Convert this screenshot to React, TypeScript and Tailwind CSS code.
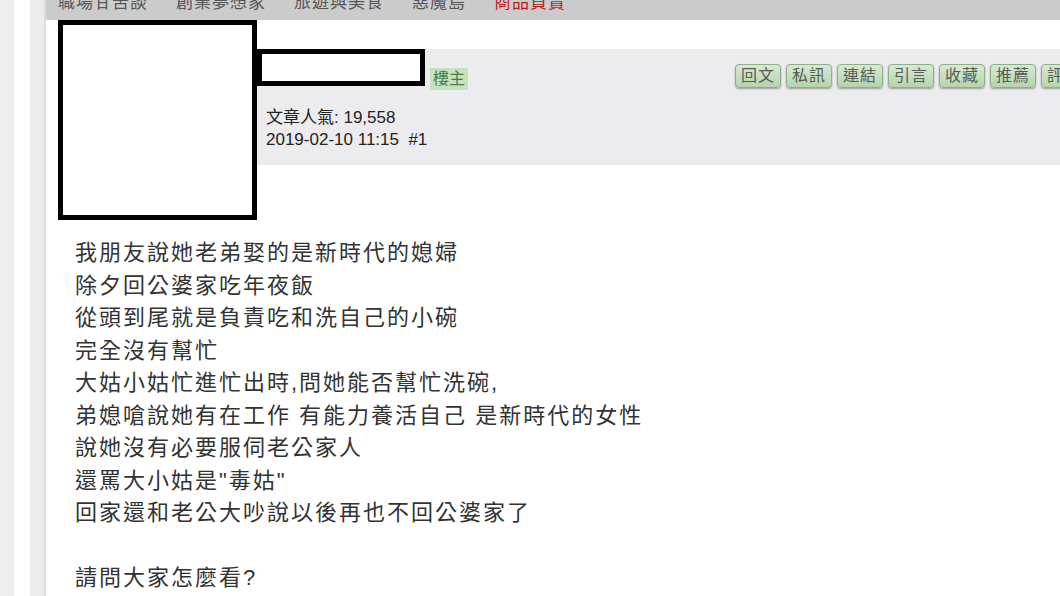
import React from "react";

const NAV = ["職場甘苦談", "創業夢想家", "旅遊與美食", "惡魔島"];

const ACTIONS = ["回文", "私訊", "連結", "引言", "收藏", "推薦", "評分"];

const LINES = [
  "我朋友說她老弟娶的是新時代的媳婦",
  "除夕回公婆家吃年夜飯",
  "從頭到尾就是負責吃和洗自己的小碗",
  "完全沒有幫忙",
  "大姑小姑忙進忙出時,問她能否幫忙洗碗,",
  "弟媳嗆說她有在工作 有能力養活自己 是新時代的女性",
  "說她沒有必要服伺老公家人",
  "還罵大小姑是\"毒姑\"",
  "回家還和老公大吵說以後再也不回公婆家了",
  "",
  "請問大家怎麼看?",
];

const App = () => {
  return (
    <div
      className="flex w-[1060px] h-[596px] overflow-hidden bg-white text-[#333]"
      style={{ fontFamily: '"Liberation Sans", "Noto Sans CJK TC", sans-serif' }}
    >
      {/* Left gutter */}
      <div className="flex shrink-0">
        <div className="w-[14px] bg-[#efefef]" />
        <div className="w-[16px] bg-white" />
        <div className="w-[14px] bg-[#ececec]" />
        <div className="w-[2px] bg-[#dcdcdc]" />
      </div>

      {/* Main column */}
      <div className="flex-1 flex flex-col min-w-0">
        {/* Board nav */}
        <div className="h-[20px] shrink-0 bg-[#cbcbcb] overflow-hidden">
          <div className="flex gap-[28px] pl-[12px] -mt-[9px] text-[17px] leading-[24px] text-[#555] tracking-[1px] whitespace-nowrap">
            {NAV.map((n) => (
              <span key={n}>{n}</span>
            ))}
            <span className="text-[#b81c1c]">商品買賣</span>
          </div>
        </div>

        {/* Post header */}
        <div className="flex pl-[12px]">
          <div className="w-[199px] h-[200px] shrink-0 border-[5px] border-black bg-white" />
          <div className="flex-1 mt-[29px] h-[116px] bg-[#ececef] flex overflow-hidden">
            <div className="w-[479px] shrink-0 flex flex-col -ml-[1px]">
              <div className="flex items-end gap-[5px]">
                <div className="w-[169px] h-[37px] border-[5px] border-l-[6px] border-black bg-white" />
                <span className="mb-[-4px] px-[3px] h-[22px] leading-[22px] bg-[#c3e2bd] text-[#4d7a4a] text-[16px]">
                  樓主
                </span>
              </div>
              <div className="mt-[21px] pl-[10px] text-[17px] leading-[22px] text-[#222]">
                <div>文章人氣: 19,558</div>
                <div>2019-02-10 11:15&nbsp; #1</div>
              </div>
            </div>
            <div className="flex gap-[5px] pt-[15px] shrink-0">
              {ACTIONS.map((a) => (
                <button
                  key={a}
                  className="w-[46px] h-[24px] shrink-0 rounded-[4px] border border-[#8fae8a] bg-gradient-to-b from-[#d6ebd1] to-[#b3d4ab] shadow-[0_1px_2px_rgba(0,0,0,0.35)] text-[16px] leading-[22px] text-[#5a5a5a] tracking-[1px]"
                >
                  {a}
                </button>
              ))}
            </div>
          </div>
        </div>

        {/* Post body */}
        <div className="pl-[29px] pt-[17px] text-[22px] leading-[32.5px] tracking-[2px] text-[#333]">
          {LINES.map((l, i) => (
            <div key={i} className="h-[32.5px] whitespace-pre">
              {l}
            </div>
          ))}
        </div>
      </div>
    </div>
  );
};

export default App;
